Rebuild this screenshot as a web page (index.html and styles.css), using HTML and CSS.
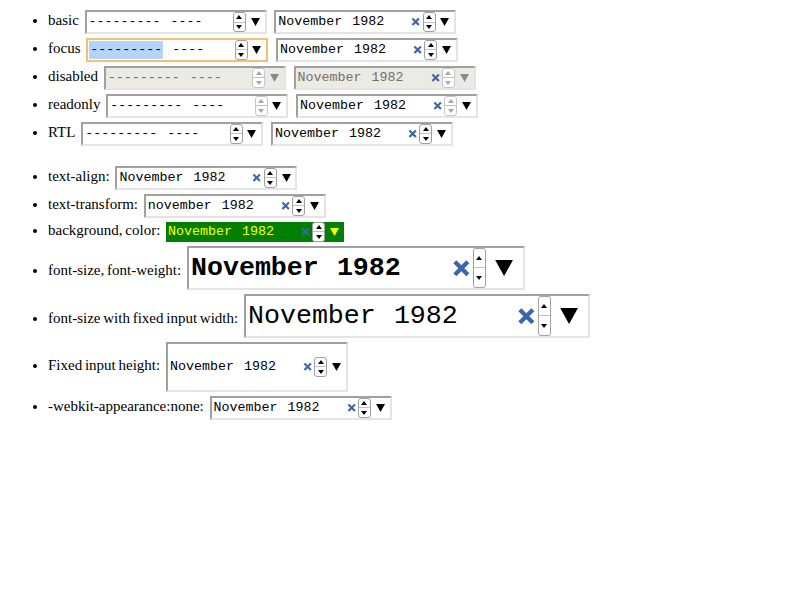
FILE: index.html
```html
<!DOCTYPE html>
<html>
<head>
<meta charset="utf-8">
<link rel="stylesheet" href="styles.css">
</head>
<body>
<ul class="list">
  <li><span class="lbl">basic</span> <span class="mi"><span class="val"><span class="fld">---------</span>&nbsp;<span class="fld">----</span></span><span class="clr hide"><svg viewBox="0 0 10 10"><path d="M1.5 1.5L8.5 8.5M8.5 1.5L1.5 8.5"/></svg></span><span class="spin"><i class="up"></i><i class="dn"></i></span><span class="drop"><svg viewBox="0 0 10 9"><polygon points="0,0 10,0 5,9"/></svg></span></span> <span class="mi"><span class="val"><span class="fld">November</span>&nbsp;<span class="fld">1982</span></span><span class="clr"><svg viewBox="0 0 10 10"><path d="M1.5 1.5L8.5 8.5M8.5 1.5L1.5 8.5"/></svg></span><span class="spin"><i class="up"></i><i class="dn"></i></span><span class="drop"><svg viewBox="0 0 10 9"><polygon points="0,0 10,0 5,9"/></svg></span></span></li>
  <li><span class="lbl">focus</span> <span class="mi foc"><span class="val"><span class="fld sel">---------</span>&nbsp;<span class="fld">----</span></span><span class="clr hide"><svg viewBox="0 0 10 10"><path d="M1.5 1.5L8.5 8.5M8.5 1.5L1.5 8.5"/></svg></span><span class="spin"><i class="up"></i><i class="dn"></i></span><span class="drop"><svg viewBox="0 0 10 9"><polygon points="0,0 10,0 5,9"/></svg></span></span> <span class="mi"><span class="val"><span class="fld">November</span>&nbsp;<span class="fld">1982</span></span><span class="clr"><svg viewBox="0 0 10 10"><path d="M1.5 1.5L8.5 8.5M8.5 1.5L1.5 8.5"/></svg></span><span class="spin"><i class="up"></i><i class="dn"></i></span><span class="drop"><svg viewBox="0 0 10 9"><polygon points="0,0 10,0 5,9"/></svg></span></span></li>
  <li><span class="lbl">disabled</span> <span class="mi dis"><span class="val"><span class="fld">---------</span>&nbsp;<span class="fld">----</span></span><span class="clr hide"><svg viewBox="0 0 10 10"><path d="M1.5 1.5L8.5 8.5M8.5 1.5L1.5 8.5"/></svg></span><span class="spin"><i class="up"></i><i class="dn"></i></span><span class="drop"><svg viewBox="0 0 10 9"><polygon points="0,0 10,0 5,9"/></svg></span></span> <span class="mi dis"><span class="val"><span class="fld">November</span>&nbsp;<span class="fld">1982</span></span><span class="clr"><svg viewBox="0 0 10 10"><path d="M1.5 1.5L8.5 8.5M8.5 1.5L1.5 8.5"/></svg></span><span class="spin"><i class="up"></i><i class="dn"></i></span><span class="drop"><svg viewBox="0 0 10 9"><polygon points="0,0 10,0 5,9"/></svg></span></span></li>
  <li><span class="lbl">readonly</span> <span class="mi ro"><span class="val"><span class="fld">---------</span>&nbsp;<span class="fld">----</span></span><span class="clr hide"><svg viewBox="0 0 10 10"><path d="M1.5 1.5L8.5 8.5M8.5 1.5L1.5 8.5"/></svg></span><span class="spin"><i class="up"></i><i class="dn"></i></span><span class="drop"><svg viewBox="0 0 10 9"><polygon points="0,0 10,0 5,9"/></svg></span></span> <span class="mi ro"><span class="val"><span class="fld">November</span>&nbsp;<span class="fld">1982</span></span><span class="clr"><svg viewBox="0 0 10 10"><path d="M1.5 1.5L8.5 8.5M8.5 1.5L1.5 8.5"/></svg></span><span class="spin"><i class="up"></i><i class="dn"></i></span><span class="drop"><svg viewBox="0 0 10 9"><polygon points="0,0 10,0 5,9"/></svg></span></span></li>
  <li><span class="lbl">RTL</span> <span class="mi"><span class="val"><span class="fld">---------</span>&nbsp;<span class="fld">----</span></span><span class="clr hide"><svg viewBox="0 0 10 10"><path d="M1.5 1.5L8.5 8.5M8.5 1.5L1.5 8.5"/></svg></span><span class="spin"><i class="up"></i><i class="dn"></i></span><span class="drop"><svg viewBox="0 0 10 9"><polygon points="0,0 10,0 5,9"/></svg></span></span> <span class="mi"><span class="val"><span class="fld">November</span>&nbsp;<span class="fld">1982</span></span><span class="clr"><svg viewBox="0 0 10 10"><path d="M1.5 1.5L8.5 8.5M8.5 1.5L1.5 8.5"/></svg></span><span class="spin"><i class="up"></i><i class="dn"></i></span><span class="drop"><svg viewBox="0 0 10 9"><polygon points="0,0 10,0 5,9"/></svg></span></span></li>
</ul>
<ul class="list">
  <li><span class="lbl">text-align:</span> <span class="mi"><span class="val"><span class="fld">November</span>&nbsp;<span class="fld">1982</span></span><span class="clr"><svg viewBox="0 0 10 10"><path d="M1.5 1.5L8.5 8.5M8.5 1.5L1.5 8.5"/></svg></span><span class="spin"><i class="up"></i><i class="dn"></i></span><span class="drop"><svg viewBox="0 0 10 9"><polygon points="0,0 10,0 5,9"/></svg></span></span></li>
  <li><span class="lbl">text-transform:</span> <span class="mi"><span class="val"><span class="fld">november</span>&nbsp;<span class="fld">1982</span></span><span class="clr"><svg viewBox="0 0 10 10"><path d="M1.5 1.5L8.5 8.5M8.5 1.5L1.5 8.5"/></svg></span><span class="spin"><i class="up"></i><i class="dn"></i></span><span class="drop"><svg viewBox="0 0 10 9"><polygon points="0,0 10,0 5,9"/></svg></span></span></li>
  <li><span class="lbl">background, color:</span> <span class="mi green"><span class="val"><span class="fld">November</span>&nbsp;<span class="fld">1982</span></span><span class="clr"><svg viewBox="0 0 10 10"><path d="M1.5 1.5L8.5 8.5M8.5 1.5L1.5 8.5"/></svg></span><span class="spin"><i class="up"></i><i class="dn"></i></span><span class="drop"><svg viewBox="0 0 10 9"><polygon points="0,0 10,0 5,9"/></svg></span></span></li>
  <li><span class="lbl">font-size, font-weight:</span> <span class="mi big"><span class="val"><span class="fld">November</span>&nbsp;<span class="fld">1982</span></span><span class="clr"><svg viewBox="0 0 10 10"><path d="M1.5 1.5L8.5 8.5M8.5 1.5L1.5 8.5"/></svg></span><span class="spin"><i class="up"></i><i class="dn"></i></span><span class="drop"><svg viewBox="0 0 10 9"><polygon points="0,0 10,0 5,9"/></svg></span></span></li>
  <li><span class="lbl">font-size with fixed input width:</span> <span class="mi wide"><span class="val"><span class="fld">November</span>&nbsp;<span class="fld">1982</span></span><span class="clr"><svg viewBox="0 0 10 10"><path d="M1.5 1.5L8.5 8.5M8.5 1.5L1.5 8.5"/></svg></span><span class="spin"><i class="up"></i><i class="dn"></i></span><span class="drop"><svg viewBox="0 0 10 9"><polygon points="0,0 10,0 5,9"/></svg></span></span></li>
  <li><span class="lbl">Fixed input height:</span> <span class="mi tall"><span class="val"><span class="fld">November</span>&nbsp;<span class="fld">1982</span></span><span class="clr"><svg viewBox="0 0 10 10"><path d="M1.5 1.5L8.5 8.5M8.5 1.5L1.5 8.5"/></svg></span><span class="spin"><i class="up"></i><i class="dn"></i></span><span class="drop"><svg viewBox="0 0 10 9"><polygon points="0,0 10,0 5,9"/></svg></span></span></li>
  <li><span class="lbl">-webkit-appearance:none:</span> <span class="mi"><span class="val"><span class="fld">November</span>&nbsp;<span class="fld">1982</span></span><span class="clr"><svg viewBox="0 0 10 10"><path d="M1.5 1.5L8.5 8.5M8.5 1.5L1.5 8.5"/></svg></span><span class="spin"><i class="up"></i><i class="dn"></i></span><span class="drop"><svg viewBox="0 0 10 9"><polygon points="0,0 10,0 5,9"/></svg></span></span></li>
</ul>
</body>
</html>
```
FILE: styles.css
```css
body {
  margin: 8px;
  font-family: "Liberation Serif", "Times New Roman", serif;
  font-size: 15px;
  color: #000;
  background: #fff;
}

.list {
  margin: 0 0 16px;
  padding-left: 40px;
}

.lbl {
  word-spacing: -1px;
}

.mi {
  display: inline-flex;
  align-items: center;
  box-sizing: border-box;
  width: 182px;
  margin: 2px;
  padding: 0 0 0 1px;
  border: 2px solid;
  border-color: #a0a0a0 #e4e4e4 #e4e4e4 #a0a0a0;
  background: #fff;
  color: #000;
  font-family: "Liberation Mono", "Courier New", monospace;
  font-size: 13.333px;
  vertical-align: baseline;
}

.val {
  flex: 1;
  display: flex;
  align-items: center;
  height: 1.5em;
  white-space: nowrap;
  overflow: hidden;
}

.fld {
  padding: 1px;
  line-height: 1.2;
}

.sel {
  background: #b4d4fc;
}

.clr {
  display: flex;
  width: 0.7em;
  height: 0.7em;
  margin-right: 2px;
  flex-shrink: 0;
}

.clr svg {
  width: 100%;
  height: 100%;
  stroke: #3c66ab;
  stroke-width: 2.3;
  fill: none;
}

.hide {
  visibility: hidden;
}

.spin {
  display: flex;
  flex-direction: column;
  flex-shrink: 0;
  box-sizing: border-box;
  width: 13px;
  height: 1.5em;
  border: 1px solid #a0a0a0;
  border-radius: 3px;
  background: #fff;
}

.spin i {
  flex: 1;
  display: flex;
  align-items: center;
  justify-content: center;
}

.spin .up {
  border-bottom: 1px solid #c0c0c0;
}

.spin i::before {
  content: "";
  width: 0;
  height: 0;
  border-left: 3.5px solid transparent;
  border-right: 3.5px solid transparent;
}

.spin .up::before {
  border-bottom: 4px solid #000;
}

.spin .dn::before {
  border-top: 4px solid #000;
}

.drop {
  display: flex;
  align-items: center;
  justify-content: center;
  flex-shrink: 0;
  width: 1.4em;
  height: 1.5em;
}

.drop svg {
  width: 0.68em;
  height: 0.6em;
  fill: currentColor;
}

.foc {
  border-color: #f0c170;
}

.dis {
  background: #ebebe4;
  color: #707070;
}

.dis .drop {
  color: #8a8a8a;
}

.dis .spin,
.ro .spin {
  border-color: #c6c6c6;
}

.dis .spin .up::before,
.ro .spin .up::before {
  border-bottom-color: #a8a8a8;
}

.dis .spin .dn::before,
.ro .spin .dn::before {
  border-top-color: #a8a8a8;
}

.green {
  width: 178px;
  border: none;
  background: #008000;
  color: #ffff00;
}

.big {
  width: 338px;
  font-size: 26.667px;
  font-weight: bold;
}

.wide {
  width: 346px;
  font-size: 26.667px;
}

.tall {
  height: 50px;
}
```
